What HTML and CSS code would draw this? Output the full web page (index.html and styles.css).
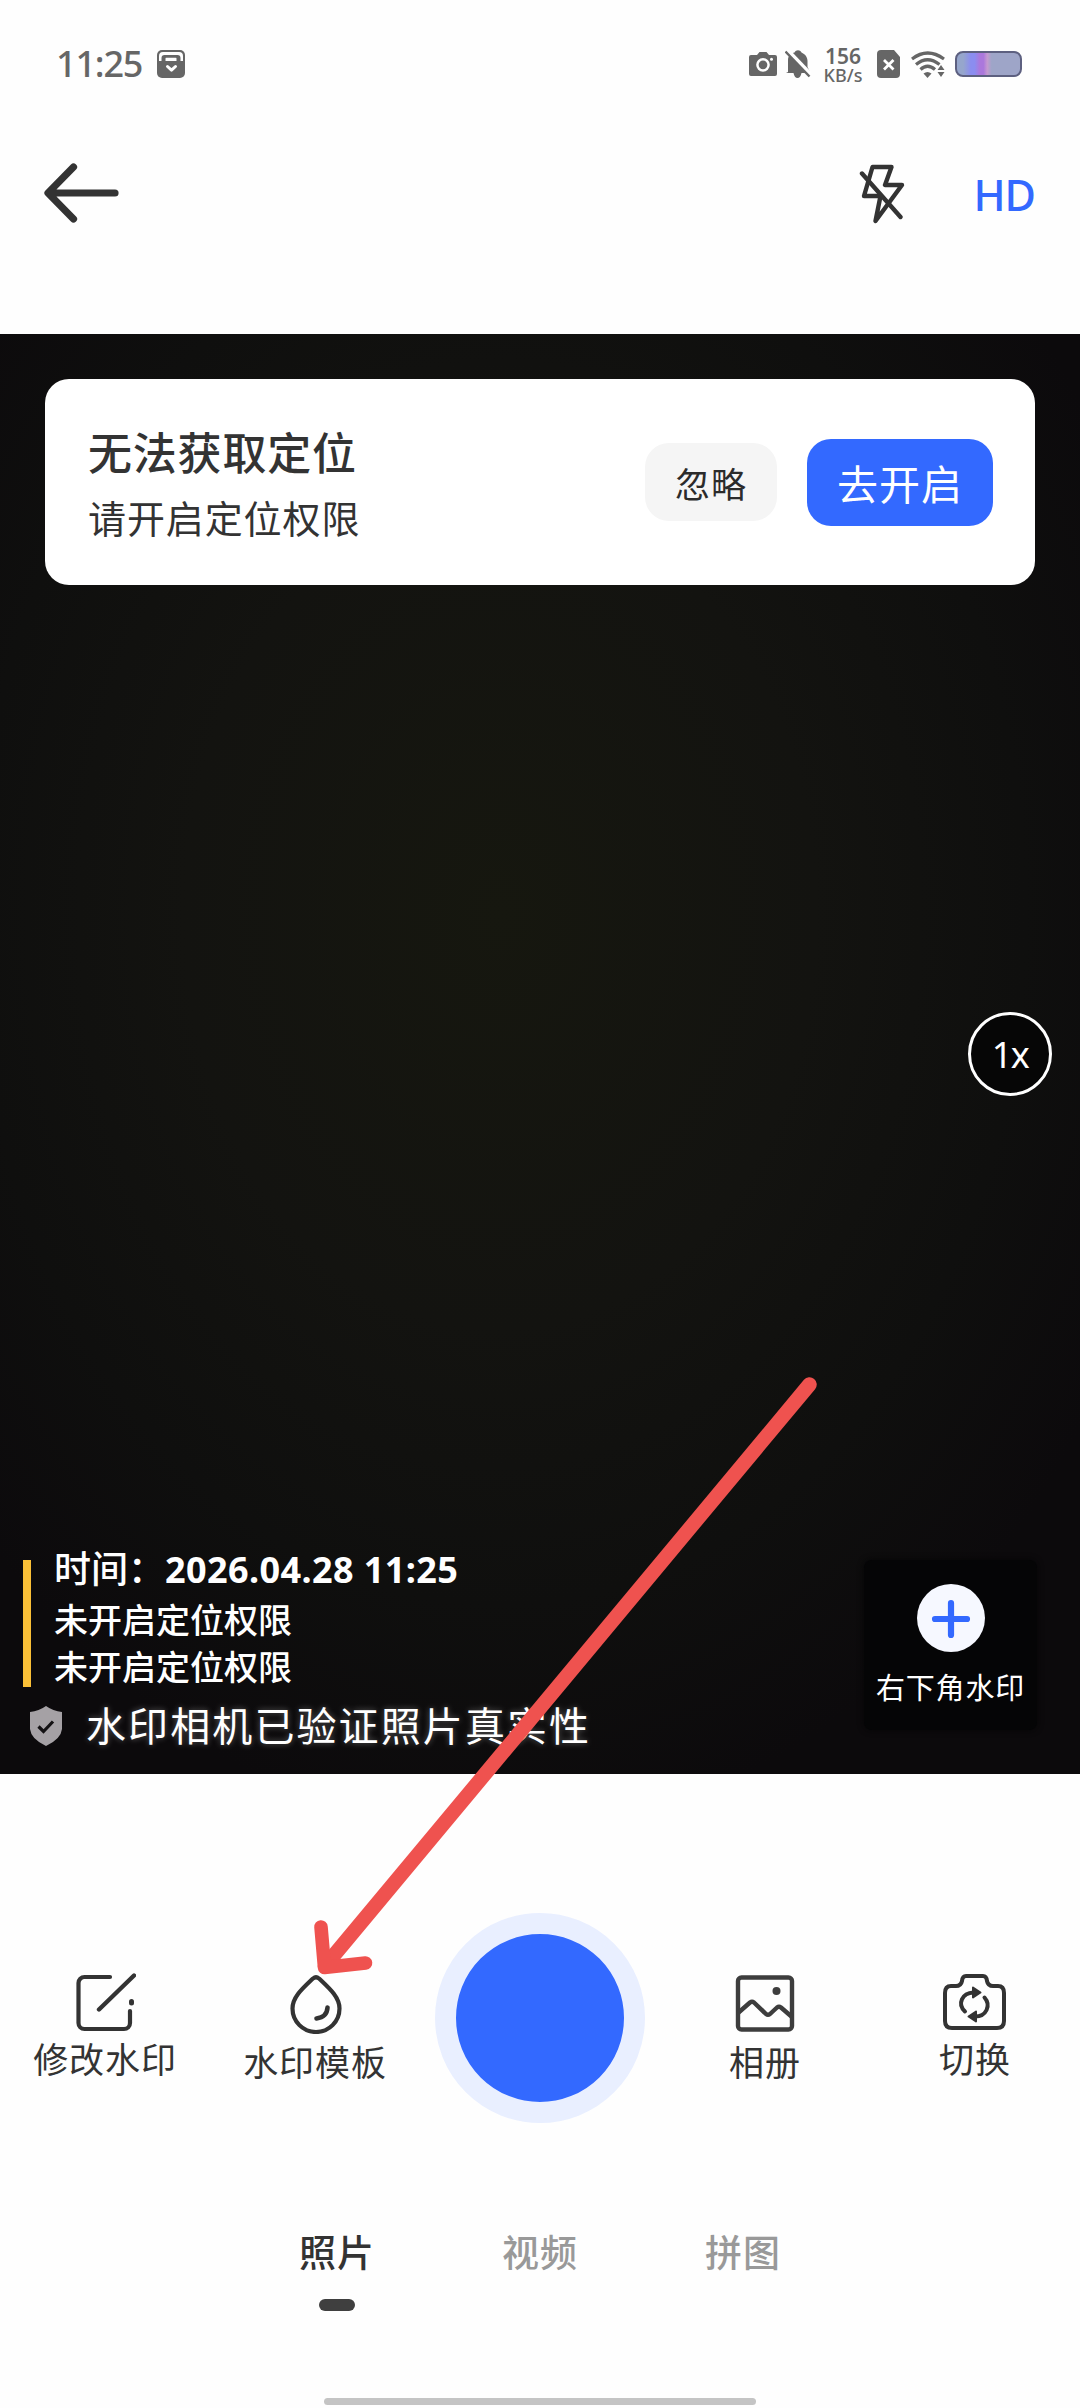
FILE: index.html
```html
<!DOCTYPE html>
<html lang="zh-CN">
<head>
<meta charset="utf-8">
<title>水印相机</title>
<link rel="stylesheet" href="styles.css">
</head>
<body>
<div class="screen">
  <header class="status">
    <span class="clock">11:25</span>
    <svg class="ic-note" width="28" height="28" viewBox="0 0 28 28"><rect width="28" height="28" rx="5" fill="#666"/><path d="M2 11V6a4 4 0 0 1 4-4h16a4 4 0 0 1 4 4v5h-2.500V8a3 3 0 0 0-3-3h-13a3 3 0 0 0-3 3v3z" fill="#fff"/><path d="M7 11V8.500q0-1 1-1h12q1 0 1 1V11z" fill="#fff"/><path d="M7.500 12V8.500a2 2 0 0 1 2-2h9a2 2 0 0 1 2 2V12" fill="none" stroke="#666" stroke-width="2"/><path d="M10.500 16.500l4 3.700 4-3.700" fill="none" stroke="#fff" stroke-width="3" stroke-linecap="round" stroke-linejoin="round"/></svg>
    <div class="status-right">
      <svg class="ic-cam" width="28" height="24" viewBox="0 0 28 24"><path d="M2 3h6l2.500-3h7L20 3h6a2 2 0 0 1 2 2v17a2 2 0 0 1-2 2H2a2 2 0 0 1-2-2V5a2 2 0 0 1 2-2z" fill="#666"/><circle cx="14" cy="12.800" r="5.600" fill="none" stroke="#fff" stroke-width="2.500"/><circle cx="22.500" cy="7.300" r="1.500" fill="#fff"/></svg>
      <svg class="ic-bell" width="26" height="28" viewBox="0 0 26 28"><path d="M3 22V10C3 5 7 3 9.500 2.500 11-.5 15-.5 16.500 2.500 20 4 22.500 7 22.500 11v6l2 4v2H16.500q-1 5-4 5t-4-5H1z" fill="#666"/><path d="M2 0L26 25" stroke="#fff" stroke-width="4.500"/><path d="M.5 1.500L24.500 26.500" stroke="#666" stroke-width="2.400"/></svg>
      <div class="speed"><span class="speed-n">156</span><span class="speed-u">KB/s</span></div>
      <svg class="ic-sim" width="23" height="28" viewBox="0 0 23 28"><path d="M4 0h13l6 7v17a4 4 0 0 1-4 4H4a4 4 0 0 1-4-4V4a4 4 0 0 1 4-4z" fill="#666"/><path d="M7 10l9.500 9.500M16.500 10L7 19.500" stroke="#fff" stroke-width="2.800"/></svg>
      <svg class="ic-wifi" width="35" height="27" viewBox="0 0 35 27"><g fill="none" stroke="#666" stroke-width="3.200"><path d="M1 8Q16.500-4 33 8"/><path d="M5 13.500Q16.500 4 28.500 13.500"/><path d="M9.500 18.500Q16.500 12 24 18.500"/></g><path d="M12.500 22.500q4-3 8 0l-4 4.500z" fill="#666"/><path d="M30 14l3.500 5h-7zM30 26l3.500-5h-7z" fill="#666"/></svg>
      <span class="battery"></span>
    </div>
  </header>

  <nav class="topbar">
    <svg width="76" height="60" viewBox="0 0 76 60"><path d="M29.500 4L4 30l25.500 26M6 30h65" fill="none" stroke="#333" stroke-width="7.200" stroke-linecap="round" stroke-linejoin="round"/></svg>
    <div class="top-actions">
      <svg width="46" height="60" viewBox="0 0 46 60"><g fill="none" stroke="#333" stroke-width="4.400" stroke-linecap="round" stroke-linejoin="round"><path d="M13.500 3h19L26 21h17L16.500 57l5-25H5z"/><path d="M3 9.500L41.500 53"/></g></svg>
      <span class="hd">HD</span>
    </div>
  </nav>

  <main class="finder">
    <section class="notice">
      <div class="notice-text">
        <div class="notice-title">无法获取定位</div>
        <div class="notice-sub">请开启定位权限</div>
      </div>
      <button class="btn-skip">忽略</button>
      <button class="btn-open">去开启</button>
    </section>
    <div class="zoom">1x</div>
    <div class="finder-foot">
      <div class="mark">
        <div class="mark-body">
          <span class="mark-bar"></span>
          <div class="mark-lines">
            <div class="mark-time">时间：<b>2026.04.28 11:25</b></div>
            <div class="mark-line">未开启定位权限</div>
            <div class="mark-line">未开启定位权限</div>
          </div>
        </div>
        <div class="verify">
          <svg width="32" height="40" viewBox="0 0 32 40"><path d="M16 0Q23 5 32 6v17q-1 10-16 17Q1 33 0 23V6Q9 5 16 0z" fill="#a5a1a5"/><path d="M8.500 20.500l5 5 9.500-10" fill="none" stroke="#141214" stroke-width="3.200"/></svg>
          <span>水印相机已验证照片真实性</span>
        </div>
      </div>
      <div class="corner">
        <svg width="68" height="68" viewBox="0 0 68 68"><circle cx="34" cy="34" r="34" fill="#f6f8ff"/><path d="M34 19v32M18 35h32" stroke="#3369ff" stroke-width="6.200" stroke-linecap="round"/></svg>
        <span>右下角水印</span>
      </div>
    </div>
  </main>

  <section class="tools">
    <div class="tool">
      <svg width="62" height="60" viewBox="0 0 62 60"><g fill="none" stroke="#333" stroke-width="4.200" stroke-linecap="round" stroke-linejoin="round"><path d="M36 5H10.500a6 6 0 0 0-6 6v40a6 6 0 0 0 6 6H50a6 6 0 0 0 6-6V39"/><path d="M25 37.500L60 3.500" stroke-width="4.400"/><path d="M57.500 29.500v1.500" stroke-width="5"/></g></svg>
      <span>修改水印</span>
    </div>
    <div class="tool low">
      <svg width="62" height="60" viewBox="0 0 62 60"><g fill="none" stroke="#333" stroke-width="4.200" stroke-linecap="round" stroke-linejoin="round"><path d="M29 4.500Q32 2 35 4.500C45 14 55.500 23 55.500 34.500a23.500 23.500 0 0 1-47 0C8.500 23 19 14 29 4.500z"/><path d="M43.500 33.500Q43 43 32.500 44.500" stroke-width="4.600"/></g></svg>
      <span>水印模板</span>
    </div>
    <div class="shutter"></div>
    <div class="tool low">
      <svg width="62" height="60" viewBox="0 0 62 60"><g fill="none" stroke="#3d3d3d" stroke-width="4.400" stroke-linejoin="round"><rect x="4" y="3.500" width="54" height="52" rx="3.500"/><path d="M4 39L16 28.500q2-1.500 4 0L32 40q2 1.500 4 0l7-6.500q2-1.500 4 0L58 43"/></g><circle cx="42.500" cy="17" r="4" fill="#3d3d3d"/></svg>
      <span>相册</span>
    </div>
    <div class="tool">
      <svg width="64" height="60" viewBox="0 0 64 60"><g fill="none" stroke="#333" stroke-width="4" stroke-linecap="round" stroke-linejoin="round"><path d="M8 14h5q5 0 6-5 .5-5 4-5h17q3.500 0 4 5 1 5 6 5h5q6 0 6 7v28q0 7-7 7H9q-7 0-7-7V21q0-7 6-7z"/><path d="M22 39.500C14 32 19 21 30.500 20.500"/><path d="M41.500 25.500C48 33 44 45 31 44.500"/></g><path d="M30 15.500l7.500 5-7.500 5zM33 39.500l-7.500 5 7.500 5z" fill="#333" stroke="#333" stroke-width="2" stroke-linejoin="round"/></svg>
      <span>切换</span>
    </div>
  </section>

  <nav class="tabs">
    <div class="tab on">照片</div>
    <div class="tab">视频</div>
    <div class="tab">拼图</div>
  </nav>
  <div class="home"></div>

  <svg class="pointer" width="520" height="620" viewBox="300 1370 520 620"><g fill="none" stroke="#ef524f" stroke-width="13.600" stroke-linecap="round" stroke-linejoin="round"><path d="M809.500 1384.500L325 1966" stroke-width="14.500"/><path d="M321 1927l3.500 40.500 41-4.500"/></g></svg>
</div>
</body>
</html>
```
FILE: styles.css
```css
* { box-sizing: border-box; }
body {
  margin: 0;
  background: #fefefe;
  color: #333;
  font-family: "Noto Sans", "Noto Sans CJK SC", sans-serif;
}
svg { display: block; flex: none; }
.screen {
  position: relative;
  width: 1080px;
  height: 2408px;
  display: flex;
  flex-direction: column;
  overflow: hidden;
}
.status {
  height: 128px;
  display: flex;
  align-items: center;
  padding: 0 58px 0 56px;
  color: #666;
}
.clock {
  width: 101px;
  font-size: 36px;
  font-weight: 500;
  line-height: 40px;
  letter-spacing: -1.200px;
  margin-top: -1px;
  white-space: nowrap;
}
.status-right { display: flex; align-items: center; margin-left: auto; }
.ic-bell { margin-left: 8px; }
.speed {
  width: 44px;
  margin-left: 10px;
  margin-top: 1px;
  display: flex;
  flex-direction: column;
  align-items: center;
  font-weight: 600;
}
.speed-n { font-size: 21px; line-height: 20px; }
.speed-u { font-size: 18px; line-height: 18px; font-weight: 500; }
.ic-sim { margin-left: 12px; }
.ic-wifi { margin-left: 11px; }
.battery {
  width: 67px;
  height: 26px;
  margin-left: 9px;
  border: 2px solid #5d6080;
  border-radius: 8px;
  background: linear-gradient(90deg, #96a6cc 0 10%, #8b8df0 22% 28%, #ab78dc 36% 42%, #c59ad0 48%, #9ea5c8 55%);
}
.topbar {
  height: 206px;
  display: flex;
  align-items: flex-start;
  justify-content: space-between;
  padding: 35px 45px 0 44px;
}
.top-actions { display: flex; align-items: center; }
.hd {
  margin-left: 68px;
  padding-top: 2px;
  color: #3369ff;
  font-size: 43px;
  font-weight: 500;
  line-height: 60px;
  letter-spacing: -1px;
}
.finder {
  height: 1440px;
  display: flex;
  flex-direction: column;
  padding: 45px 0 0;
  background: radial-gradient(ellipse 700px 920px at 500px 580px, #16170f 0%, #131310 45%, #0f0f0e 75%, #0c0a0c 100%);
}
.notice {
  height: 206px;
  margin: 0 45px;
  padding: 0 42px 0 43px;
  border-radius: 24px;
  background: #fff;
  display: flex;
  align-items: center;
}
.notice-text { flex: 1; padding-top: 6px; }
.notice-title {
  font-size: 44px;
  font-weight: 500;
  line-height: 66px;
  letter-spacing: .8px;
}
.notice-sub { font-size: 38px; line-height: 64px; letter-spacing: .9px; }
button {
  border: 0;
  padding: 0;
  font-family: inherit;
  letter-spacing: 1px;
}
.btn-skip {
  width: 132px;
  height: 78px;
  border-radius: 24px;
  background: #f5f5f5;
  color: #2b2b2b;
  font-size: 35px;
}
.btn-open {
  width: 186px;
  height: 87px;
  margin-left: 30px;
  border-radius: 24px;
  background: #3369ff;
  color: #fff;
  font-size: 41px;
}
.zoom {
  width: 84px;
  height: 84px;
  margin: 427px 28px 0 auto;
  border: 3px solid #fff;
  border-radius: 50%;
  background: #060606;
  color: #fff;
  font-size: 36px;
  line-height: 80px;
  text-align: center;
  letter-spacing: -1.500px;
}
.finder-foot {
  flex: 1;
  display: flex;
  justify-content: space-between;
  align-items: flex-end;
  padding: 0 43px 18px 23px;
  color: #fff;
}
.mark-body { display: flex; }
.mark-bar { width: 8px; height: 127px; margin-top: 19px; background: #fbc037; }
.mark-lines { margin-left: 23px; font-weight: 500; }
.mark-time { font-size: 37px; line-height: 55px; white-space: nowrap; }
.mark-time b { font-size: 36px; font-weight: 700; letter-spacing: .4px; }
.mark-line { font-size: 34px; line-height: 47px; }
.verify {
  display: flex;
  align-items: center;
  height: 60px;
  margin-top: 5px;
  padding-left: 7px;
  font-size: 40px;
  letter-spacing: 2.100px;
  text-shadow: 0 0 6px rgba(255, 255, 255, .35);
}
.verify span { margin-left: 24px; line-height: 60px; }
.corner {
  width: 173px;
  height: 170px;
  margin-bottom: 26px;
  padding-top: 24px;
  display: flex;
  flex-direction: column;
  align-items: center;
  border-radius: 8px;
  background: #050506;
  box-shadow: 0 0 6px #050506;
}
.corner span { margin-top: 16px; font-size: 29px; line-height: 40px; letter-spacing: .8px; }
.tools {
  height: 349px;
  display: flex;
  align-items: flex-start;
}
.tool {
  width: 210px;
  padding-top: 198px;
  display: flex;
  flex-direction: column;
  align-items: center;
  font-size: 35px;
}
.tool span { margin-top: 4px; line-height: 48px; letter-spacing: .9px; }
.tool.low { padding-top: 200px; }
.tool.low span { margin-top: 5px; }
.shutter {
  width: 210px;
  height: 210px;
  margin: 139px 15px 0;
  border: 21px solid #e9efff;
  border-radius: 50%;
  background: #3369ff;
}
.tabs {
  height: 275px;
  display: flex;
  justify-content: center;
  padding-top: 105px;
}
.tab {
  width: 203px;
  font-size: 37px;
  font-weight: 500;
  line-height: 50px;
  letter-spacing: 1px;
  text-align: center;
  color: #999;
}
.tab.on { color: #333; }
.tab.on::after {
  content: "";
  display: block;
  width: 36px;
  height: 12px;
  margin: 21px auto 0;
  border-radius: 6px;
  background: #3f3f3f;
}
.home {
  width: 432px;
  height: 7px;
  margin: 0 auto;
  border-radius: 4px;
  background: #c4c4c4;
}
.pointer { position: absolute; left: 300px; top: 1370px; }
```
